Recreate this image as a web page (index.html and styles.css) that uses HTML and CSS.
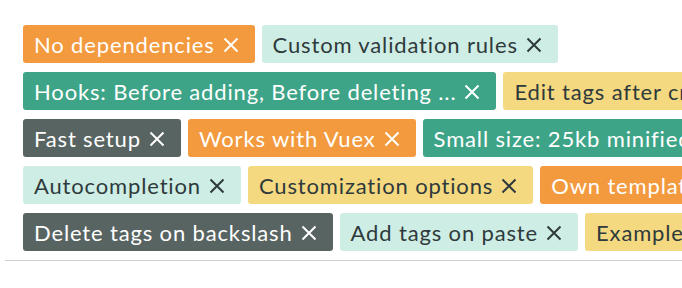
FILE: index.html
```html
<!DOCTYPE html>
<html lang="en">
<head>
    <meta charset="UTF-8">
    <title>Tags</title>
    <link rel="stylesheet" href="styles.css">
</head>
<body>
    <div class="tags-input">
        <span class="tag orange">No dependencies <svg class="close" viewBox="0 0 16 16"><path d="M1.5 1.5L14.5 14.5M14.5 1.5L1.5 14.5"/></svg></span>
        <span class="tag mint">Custom validation rules <svg class="close" viewBox="0 0 16 16"><path d="M1.5 1.5L14.5 14.5M14.5 1.5L1.5 14.5"/></svg></span>
        <span class="tag teal">Hooks: Before adding, Before deleting ... <svg class="close" viewBox="0 0 16 16"><path d="M1.5 1.5L14.5 14.5M14.5 1.5L1.5 14.5"/></svg></span>
        <span class="tag yellow">Edit tags after creating <svg class="close" viewBox="0 0 16 16"><path d="M1.5 1.5L14.5 14.5M14.5 1.5L1.5 14.5"/></svg></span>
        <span class="tag dark">Fast setup <svg class="close" viewBox="0 0 16 16"><path d="M1.5 1.5L14.5 14.5M14.5 1.5L1.5 14.5"/></svg></span>
        <span class="tag orange">Works with Vuex <svg class="close" viewBox="0 0 16 16"><path d="M1.5 1.5L14.5 14.5M14.5 1.5L1.5 14.5"/></svg></span>
        <span class="tag teal">Small size: 25kb minified <svg class="close" viewBox="0 0 16 16"><path d="M1.5 1.5L14.5 14.5M14.5 1.5L1.5 14.5"/></svg></span>
        <span class="tag mint">Autocompletion <svg class="close" viewBox="0 0 16 16"><path d="M1.5 1.5L14.5 14.5M14.5 1.5L1.5 14.5"/></svg></span>
        <span class="tag yellow">Customization options <svg class="close" viewBox="0 0 16 16"><path d="M1.5 1.5L14.5 14.5M14.5 1.5L1.5 14.5"/></svg></span>
        <span class="tag orange">Own templates <svg class="close" viewBox="0 0 16 16"><path d="M1.5 1.5L14.5 14.5M14.5 1.5L1.5 14.5"/></svg></span>
        <span class="tag dark">Delete tags on backslash <svg class="close" viewBox="0 0 16 16"><path d="M1.5 1.5L14.5 14.5M14.5 1.5L1.5 14.5"/></svg></span>
        <span class="tag mint">Add tags on paste <svg class="close" viewBox="0 0 16 16"><path d="M1.5 1.5L14.5 14.5M14.5 1.5L1.5 14.5"/></svg></span>
        <span class="tag yellow">Examples <svg class="close" viewBox="0 0 16 16"><path d="M1.5 1.5L14.5 14.5M14.5 1.5L1.5 14.5"/></svg></span>
    </div>
</body>
</html>
```

FILE: styles.css
```css
body {
    margin: 0;
    font-family: 'Lato', sans-serif;
    background: white;
    overflow: hidden;
}

.tags-input {
    width: 820px;
    margin-left: 5px;
    padding: 25px 0 9px 18px;
    border-bottom: 1px solid #cfcfcf;
    display: flex;
    flex-wrap: wrap;
    gap: 9px 7px;
}

.tag {
    display: inline-flex;
    align-items: center;
    height: 38px;
    box-sizing: border-box;
    padding: 0 16px 0 11px;
    border-radius: 3px;
    font-size: 22px;
    letter-spacing: 0.85px;
    white-space: nowrap;
}

.close {
    width: 16px;
    height: 16px;
    margin: 1px 0 0 8px;
    fill: none;
    stroke: currentColor;
    stroke-width: 2;
}

.orange {
    background: #f39a3e;
    color: white;
}

.mint {
    background: #ceede4;
    color: #2e3a3c;
}

.teal {
    background: #3da488;
    color: white;
}

.yellow {
    background: #f5d980;
    color: #2e3a3c;
}

.dark {
    background: #586462;
    color: white;
}
```
